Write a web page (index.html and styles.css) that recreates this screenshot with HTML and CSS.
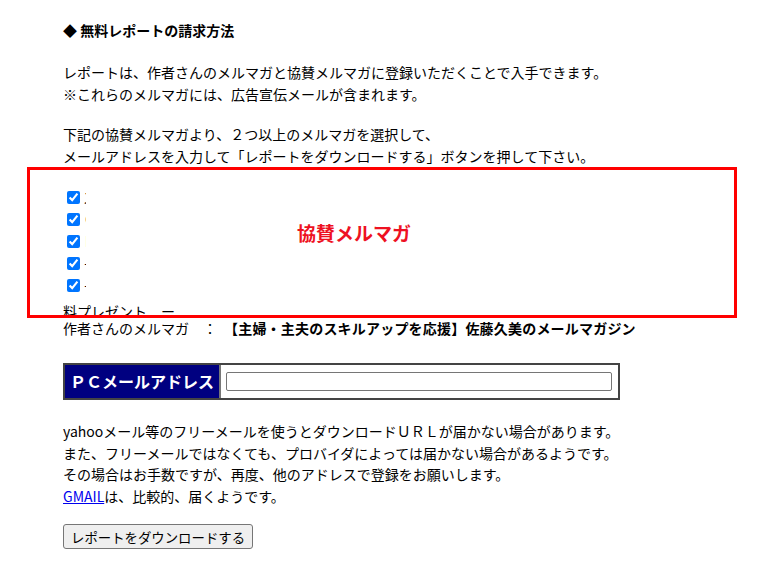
FILE: index.html
```html
<!DOCTYPE html>
<html lang="ja">
<head>
  <meta charset="UTF-8" />
  <meta name="viewport" content="width=device-width, initial-scale=1.0"/>
  <title>無料レポートの請求方法</title>
  <link rel="stylesheet" href="styles.css">
</head>
<body>
  <div class="page">
    <h2 class="title">◆ 無料レポートの請求方法</h2>

    <p class="intro">レポートは、作者さんのメルマガと協賛メルマガに登録いただくことで入手できます。<br>
    ※これらのメルマガには、広告宣伝メールが含まれます。</p>

    <p class="guide">下記の協賛メルマガより、２つ以上のメルマガを選択して、<br>
    メールアドレスを入力して「レポートをダウンロードする」ボタンを押して下さい。</p>

    <div class="sponsor-box">
      <div class="sponsor-list">
        <label class="sponsor"><input type="checkbox" checked><span class="name">ス</span></label>
        <label class="sponsor"><input type="checkbox" checked><span class="name">Ｃ</span></label>
        <label class="sponsor"><input type="checkbox" checked><span class="name">Ｂ</span></label>
        <label class="sponsor"><input type="checkbox" checked><span class="name">－</span></label>
        <label class="sponsor"><input type="checkbox" checked><span class="name">－</span></label>
      </div>
      <div class="present">料プレゼント　ー</div>
      <div class="box-label">協賛メルマガ</div>
    </div>

    <div class="author">作者さんのメルマガ　：　<b>【主婦・主夫のスキルアップを応援】佐藤久美のメールマガジン</b></div>

    <div class="mail-form">
      <div class="mail-label">ＰＣメールアドレス</div>
      <div class="mail-field"><input type="text" class="mail-input"></div>
    </div>

    <p class="notice">yahooメール等のフリーメールを使うとダウンロードＵＲＬが届かない場合があります。<br>
    また、フリーメールではなくても、プロバイダによっては届かない場合があるようです。<br>
    その場合はお手数ですが、再度、他のアドレスで登録をお願いします。<br>
    <a href="#">GMAIL</a>は、比較的、届くようです。</p>

    <button class="download">レポートをダウンロードする</button>
  </div>
</body>
</html>
```

FILE: styles.css
```css
body {
  margin: 0;
  font-family: "Noto Sans CJK JP", "Noto Sans", sans-serif;
  font-size: 14px;
  line-height: 22px;
  color: #000;
  background: #fff;
}

.page {
  padding: 19px 0 0 63px;
}

.title {
  margin: 0;
  font-size: 14px;
  font-weight: bold;
}

.intro {
  margin: 20px 0 0;
}

.guide {
  margin: 18px 0 0;
}

.sponsor-box {
  position: relative;
  margin-left: -36px;
  width: 704px;
  height: 145px;
  border: 3px solid #f00;
  overflow: hidden;
}

.sponsor-list {
  padding: 16px 0 0 37px;
}

.sponsor {
  display: flex;
  align-items: center;
  height: 22px;
}

.sponsor input {
  margin: 0;
  width: 13px;
  height: 13px;
}

.sponsor .name {
  margin-left: 3px;
  width: 3px;
  overflow: hidden;
  white-space: nowrap;
}

.present {
  padding: 4px 0 0 33px;
  white-space: nowrap;
}

.box-label {
  position: absolute;
  left: 267px;
  top: 52px;
  font-size: 19px;
  font-weight: bold;
  color: #ee1122;
}

.author {
  margin-top: -1px;
  white-space: nowrap;
}

.author b {
  letter-spacing: 0.2px;
}

.mail-form {
  display: flex;
  margin-top: 24px;
  width: 553px;
  border: 2px solid #444;
}

.mail-label {
  width: 154px;
  height: 33px;
  line-height: 33px;
  background: #000080;
  color: #fff;
  font-size: 16px;
  font-weight: bold;
  text-align: center;
  border-right: 2px solid #777;
}

.mail-field {
  flex: 1;
  display: flex;
  align-items: center;
  padding: 0 6px 0 5px;
}

.mail-input {
  width: 100%;
  height: 19px;
  box-sizing: border-box;
  border: 1px solid #767676;
  border-radius: 2px;
  padding: 0 2px;
}

.notice {
  margin: 21px 0 0;
  line-height: 21.5px;
}

.notice a {
  color: #0000ee;
}

.download {
  margin-top: 17px;
  height: 25px;
  padding: 0 7px;
  font-family: "Noto Sans CJK JP", sans-serif;
  font-size: 13.4px;
  background: #efefef;
  border: 1px solid #767676;
  border-radius: 3px;
  color: #000;
}
```
